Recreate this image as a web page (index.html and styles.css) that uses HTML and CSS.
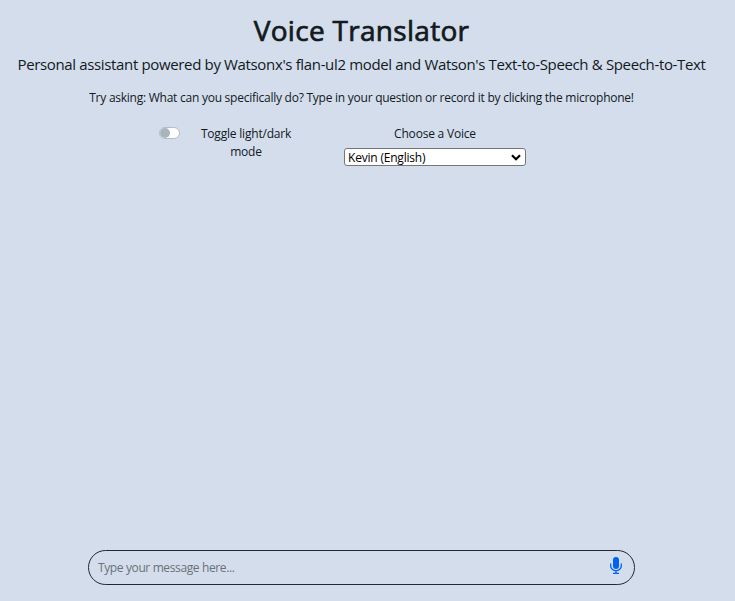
FILE: index.html
```html
<!DOCTYPE html>
<html lang="en">
<head>
<meta charset="utf-8">
<title>Voice Translator</title>
<link rel="stylesheet" href="styles.css">
</head>
<body>
<main class="app">
  <h1 class="title"><span>Voice Translator</span></h1>
  <p class="lead"><span>Personal assistant powered by Watsonx's flan-ul2 model and Watson's Text-to-Speech &amp; Speech-to-Text</span></p>
  <p class="hint"><span>Try asking: What can you specifically do? Type in your question or record it by clicking the microphone!</span></p>
  <div class="options">
    <span class="switch"><span class="knob"></span></span>
    <label class="toggle-label"><span>Toggle light/dark</span><br><span>mode</span></label>
    <div class="voice">
      <label class="voice-label"><span>Choose a Voice</span></label>
      <div class="select"><span>Kevin (English)</span>
        <svg class="chevron" width="10" height="7" viewBox="0 0 10 7"><path d="M1 1.2 5 5.2 9 1.2" fill="none" stroke="#000" stroke-width="2.2"/></svg>
      </div>
    </div>
  </div>
  <div class="composer">
    <span class="placeholder">Type your message here...</span>
    <svg class="mic" width="12" height="17" viewBox="0 0 12 17"><rect x="3" y="0" width="6" height="12" rx="3" fill="#0062f0"/><path d="M.7 6.5V9a5.3 4.7 0 0 0 10.6 0V6.5M6 13.7v2.6M3 16.3h6" fill="none" stroke="#0062f0" stroke-width="1.3"/></svg>
  </div>
</main>
</body>
</html>
```
FILE: styles.css
```css
* { box-sizing: border-box; }
body { margin: 0; background: #d4ddec; color: #111a1c; font-family: "Open Sans", "Noto Sans", sans-serif; font-size: 12px; line-height: 18px; }
.app { width: 723px; height: 601px; display: flex; flex-direction: column; align-items: center; white-space: nowrap; }
.title { margin: 12px 0 0; font-size: 28px; line-height: 36px; font-weight: 400; letter-spacing: 0.3px; -webkit-text-stroke: 0.7px #111a1c; }
.lead { margin: 4px 0 0; font-size: 15px; line-height: 24px; letter-spacing: -0.35px; }
.hint { margin: 13px 0 0; letter-spacing: -0.25px; }
.options { width: 545px; margin-top: 18px; padding-left: 70px; display: flex; align-items: flex-start; letter-spacing: -0.2px; }
.switch { width: 21px; height: 12px; margin-top: 2px; border: 1px solid #b5bcc2; border-radius: 6px; background: #fff; }
.knob { display: block; width: 10px; height: 10px; border-radius: 50%; background: #a9b4bd; }
.toggle-label { width: 92px; margin-left: 20px; text-align: center; }
.voice { width: 182px; margin-left: 52px; text-align: center; }
.voice-label { display: block; }
.select { height: 18px; margin-top: 5px; padding: 1px 4px 0 3px; display: flex; align-items: center; justify-content: space-between; background: #fff; border: 1px solid #767676; border-radius: 3px; color: #000; line-height: 16px; }
.composer { width: 547px; height: 35px; margin-top: auto; margin-bottom: 16px; padding: 0 12px 0 9px; display: flex; align-items: center; justify-content: space-between; border: 1px solid #25282b; border-radius: 18px; color: #697179; letter-spacing: -0.38px; }
.mic { margin-top: -4px; }
```
